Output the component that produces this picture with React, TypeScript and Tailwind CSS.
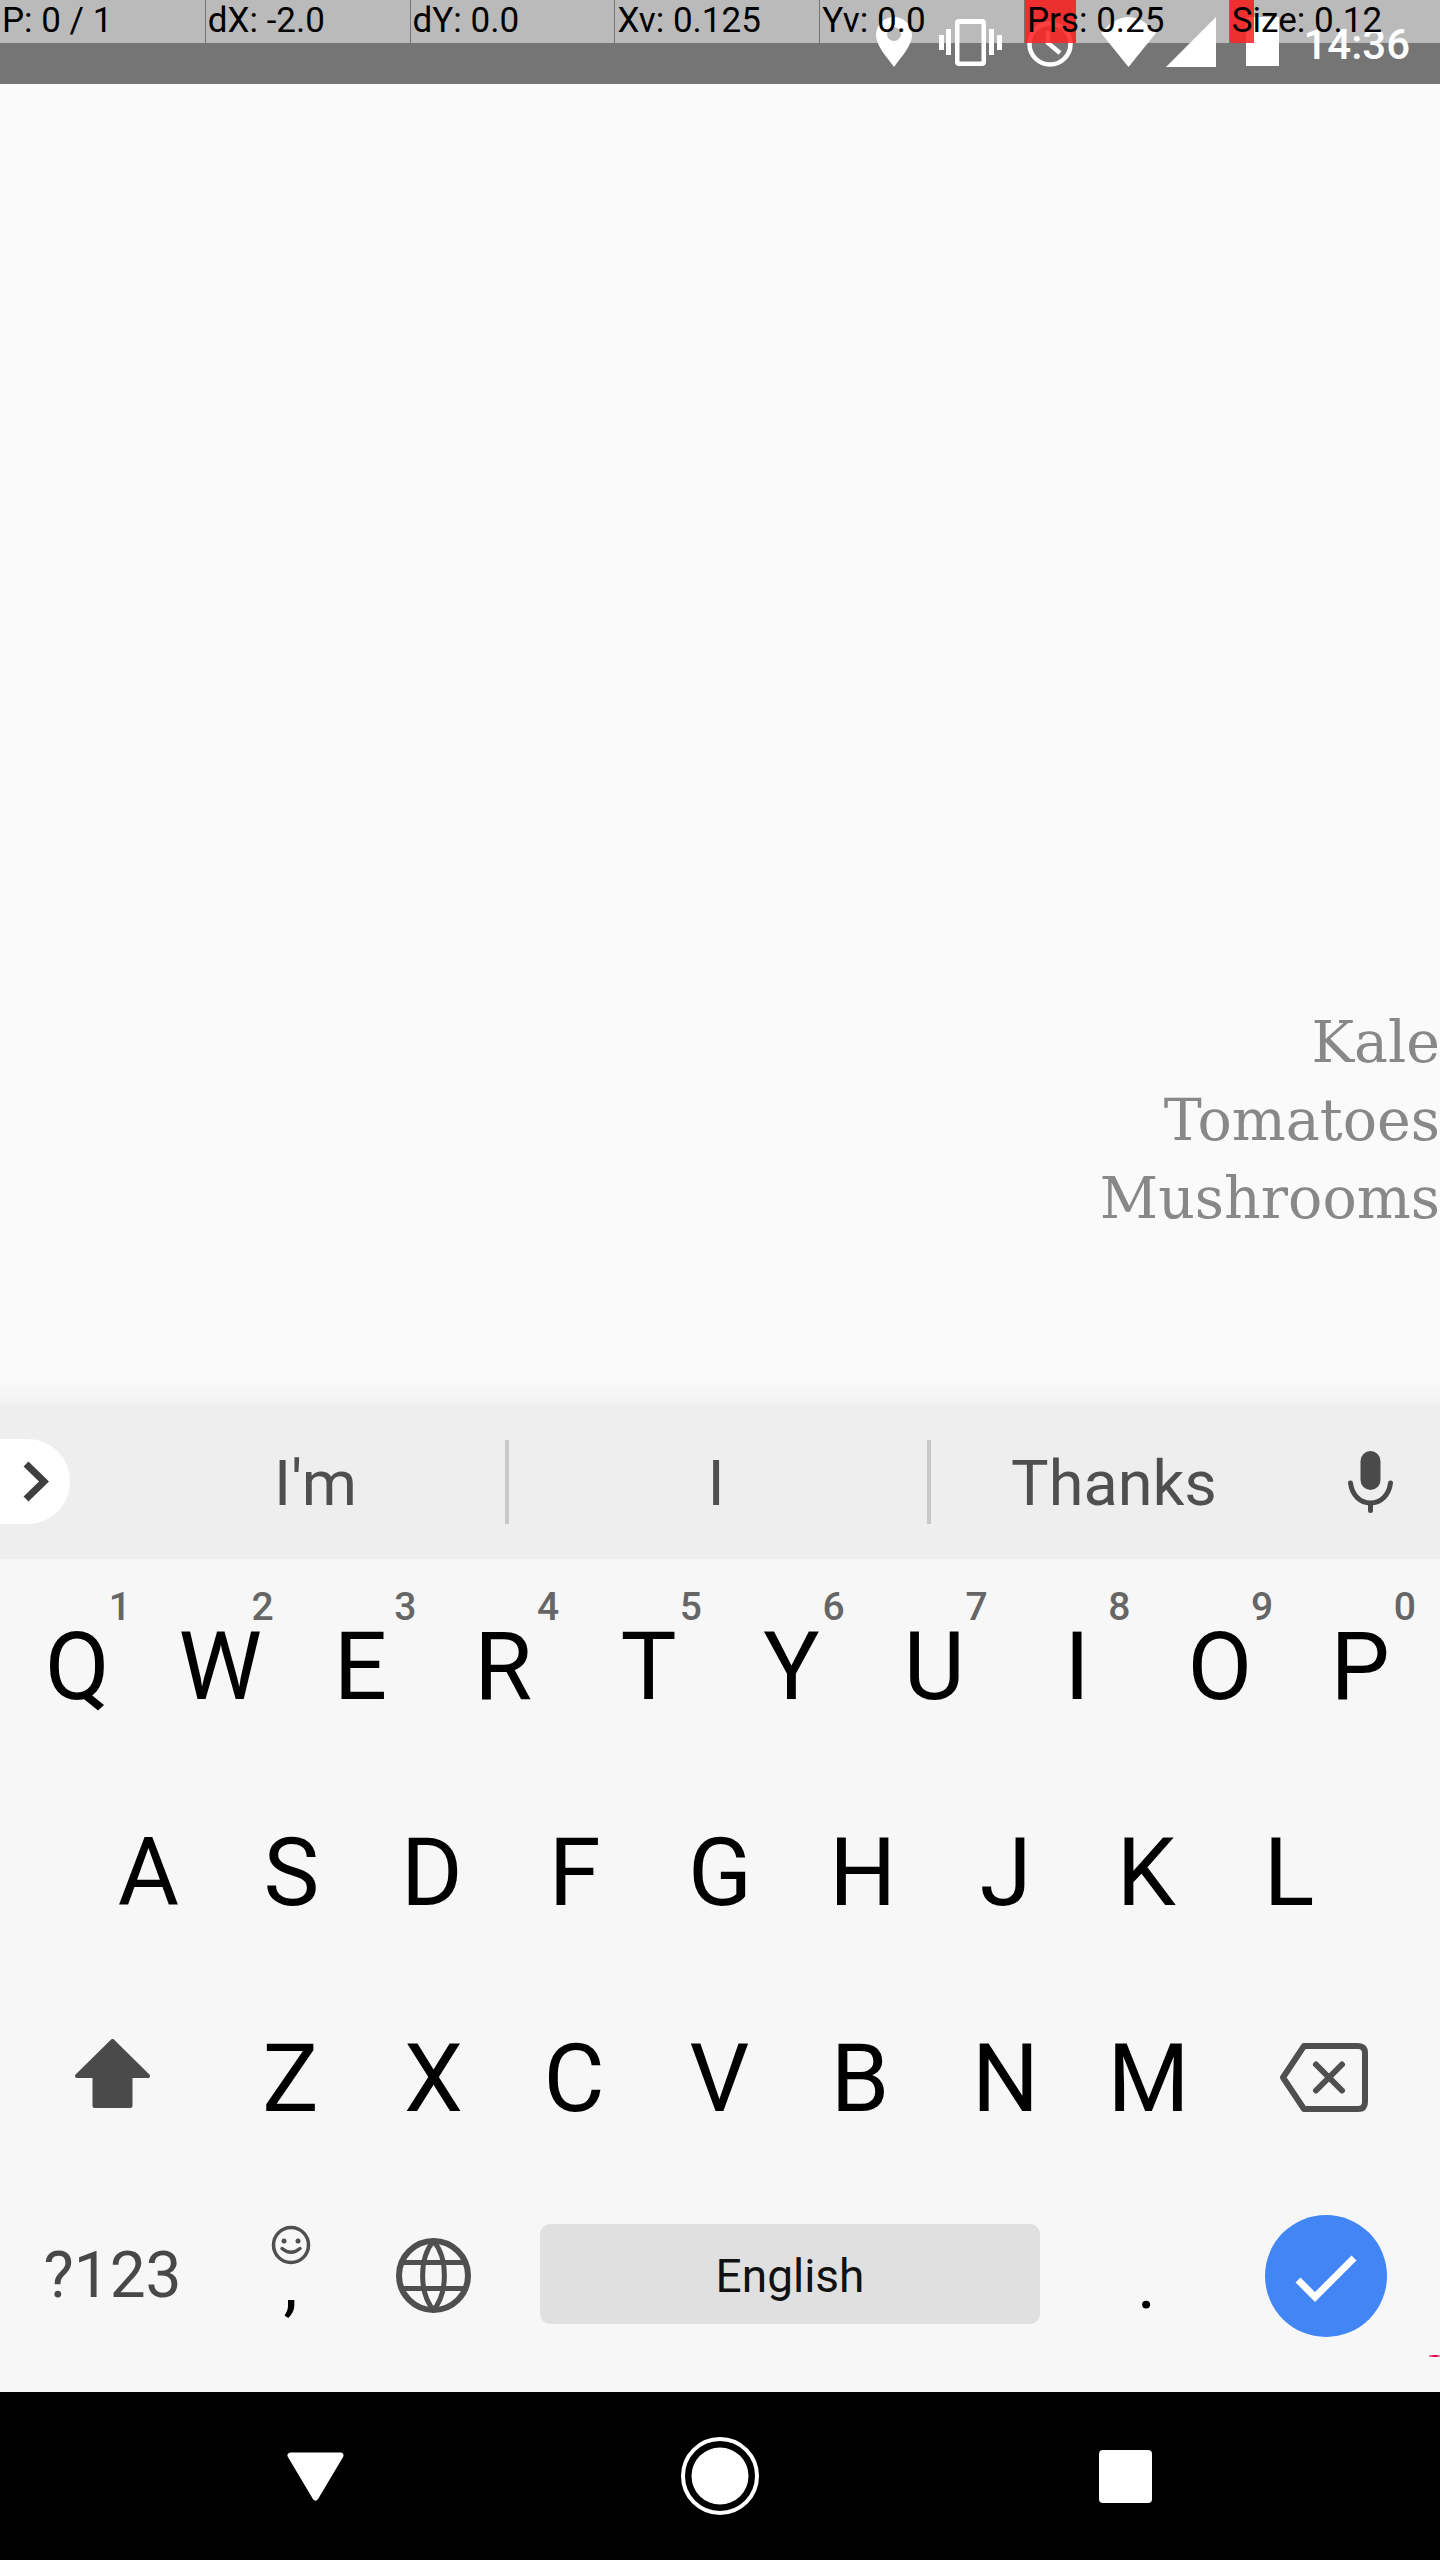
const pointerStats = [
  { label: 'P: 0 / 1' },
  { label: 'dX: -2.0' },
  { label: 'dY: 0.0' },
  { label: 'Xv: 0.125' },
  { label: 'Yv: 0.0' },
  { label: 'Prs: 0.25', bar: 0.25 },
  { label: 'Size: 0.12', bar: 0.12 },
]

const topRow = [
  ['Q', '1'],
  ['W', '2'],
  ['E', '3'],
  ['R', '4'],
  ['T', '5'],
  ['Y', '6'],
  ['U', '7'],
  ['I', '8'],
  ['O', '9'],
  ['P', '0'],
]
const middleRow = ['A', 'S', 'D', 'F', 'G', 'H', 'J', 'K', 'L']
const bottomRow = ['Z', 'X', 'C', 'V', 'B', 'N', 'M']

// these sit a little left of their key's centre in the reference
const leftLeaning = 'ERPDFKLCB'

function StatusIcons() {
  return (
    <div className="flex h-[84px] items-start justify-end bg-[#757575] pt-[17px] pr-[30px]">
      {/* location pin */}
      <svg width="36" height="50" viewBox="0 0 36 50" fill="white">
        <path
          fillRule="evenodd"
          d="M18 0C8 0 0 8 0 18C0 29 11 40 18 50C25 40 36 29 36 18C36 8 28 0 18 0ZM18 10A7 7 0 1 1 18 24A7 7 0 1 1 18 10Z"
        />
      </svg>
      {/* vibrate */}
      <svg className="ml-[27px]" width="63" height="50" viewBox="0 0 63 50" fill="white">
        <path
          fillRule="evenodd"
          d="M20 2H43Q47 2 47 6V45Q47 49 43 49H20Q16 49 16 45V6Q16 2 20 2ZM20.5 7V44.5H42.5V7Z"
        />
        <rect x="0" y="18" width="5" height="15" />
        <rect x="7" y="12" width="5" height="26" />
        <rect x="50" y="12" width="5" height="26" />
        <rect x="58" y="18" width="5" height="15" />
      </svg>
      {/* alarm clock */}
      <svg className="ml-[25px]" width="46" height="50" viewBox="0 0 46 50" fill="none" stroke="white" strokeWidth="4.5">
        <circle cx="23" cy="27" r="20.5" />
        <path d="M21 14V26L33 36" />
      </svg>
      {/* wifi */}
      <svg className="ml-[28px]" width="55" height="50" viewBox="0 0 55 50" fill="white">
        <path d="M0 16Q27.5 -16 55 16L27.5 50Z" />
      </svg>
      {/* signal */}
      <svg className="ml-[10px]" width="50" height="50" viewBox="0 0 50 50" fill="white">
        <path d="M0 50L50 0V50Z" />
      </svg>
      {/* battery */}
      <div className="ml-[30px] h-[49px] w-[33px] bg-white" />
      <span className="ml-[24px] font-[Roboto,sans-serif] text-[42px] leading-[55px] font-medium text-white">14:36</span>
    </div>
  )
}

function PointerOverlay() {
  return (
    <div className="absolute inset-x-0 top-0 flex h-[43px] bg-white/50">
      {pointerStats.map((stat, i) => (
        <div
          key={stat.label}
          className={`relative pl-[2px] ${i > 0 ? 'border-l border-[#757575]' : ''} ${i === 6 ? 'flex-1' : 'w-[204.8px] shrink-0'}`}
        >
          {stat.bar ? <div className="absolute inset-y-0 left-0 bg-[#ff0000]/75" style={{ width: `${stat.bar * 204.8}px` }} /> : null}
          <span className="relative whitespace-nowrap font-[Roboto,sans-serif] text-[35px] leading-[42px] text-black">{stat.label}</span>
        </div>
      ))}
    </div>
  )
}

function Suggestions() {
  return (
    <div className="flex h-[155px] items-center bg-[#eeeeee] font-[Roboto,sans-serif] text-[63px] text-[#4f4f4f]">
      <div className="flex h-[85px] w-[70px] items-center rounded-r-[42px] bg-white pl-[23px]">
        <svg width="26" height="41" viewBox="0 0 26 41" fill="none" stroke="#3f3f3f" strokeWidth="7">
          <path d="M3 3L21 20.5L3 38" />
        </svg>
      </div>
      <div className="w-[435px] pt-[5px] pl-[56px] text-center">I'm</div>
      <div className="h-[84px] w-[4px] bg-[#c8c8c8]" />
      <div className="w-[418px] pt-[5px] pr-[4px] text-center">I</div>
      <div className="h-[84px] w-[4px] bg-[#c8c8c8]" />
      <div className="w-[366px] pt-[5px] text-center">Thanks</div>
      <svg className="ml-[51px]" width="45" height="62" viewBox="0 0 45 62" fill="none">
        <rect x="12.5" y="0" width="20" height="39" rx="10" fill="#4a4a4a" />
        <path
          d="M2.5 32C4 44 12 52 22.5 52S41 44 42.5 32M22.5 52V59.5"
          stroke="#4a4a4a"
          strokeWidth="5"
          strokeLinecap="round"
        />
      </svg>
    </div>
  )
}

function LetterKey({ letter, hint }: { letter: string; hint?: string }) {
  return (
    <div className="relative flex h-full flex-1 items-center justify-center text-[94px] leading-none text-black">
      <span className={leftLeaning.includes(letter) ? 'mr-[5px]' : ''}>{letter}</span>
      {hint ? (
        <span className="absolute top-[24px] right-[18px] text-[39px] leading-none font-medium text-[#666666]">{hint}</span>
      ) : null}
    </div>
  )
}

function Keyboard() {
  return (
    <div className="relative flex h-[833px] flex-col bg-[#f7f7f7] pt-[5px] font-[Roboto,sans-serif]">
      <div className="flex h-[206px] px-[6px]">
        {topRow.map(([letter, hint]) => (
          <LetterKey key={letter} letter={letter} hint={hint} />
        ))}
      </div>
      <div className="flex h-[206px] px-[77px]">
        {middleRow.map((letter) => (
          <LetterKey key={letter} letter={letter} />
        ))}
      </div>
      <div className="flex h-[206px] items-center px-[6px]">
        <div className="flex h-full w-[213px] items-center justify-center pb-[11px]">
          <svg width="75" height="69" viewBox="0 0 75 69" fill="#4a4a4a" stroke="#4a4a4a" strokeWidth="4" strokeLinejoin="round">
            <path d="M37.5 2L73 37H55.5V67H19.5V37H2Z" />
          </svg>
        </div>
        <div className="flex h-full w-[1001px]">
          {bottomRow.map((letter) => (
            <LetterKey key={letter} letter={letter} />
          ))}
        </div>
        <div className="flex h-full flex-1 items-center justify-center pr-[6px] pb-[4px]">
          <svg width="88" height="69" viewBox="0 0 88 69" fill="none" stroke="#4f4f4f" strokeWidth="6">
            <path d="M24 3H78Q85 3 85 10V59Q85 66 78 66H24L3 34.5Z" strokeLinejoin="round" />
            <path d="M36 21.5L62 47.5M62 21.5L36 47.5" strokeLinecap="round" />
          </svg>
        </div>
      </div>
      <div className="flex h-[186px] items-center px-[6px]">
        <div className="flex w-[213px] justify-center pt-[2px] text-[64px] leading-none text-[#484848]">?123</div>
        <div className="relative flex h-full w-[143px] items-center justify-center pt-[17px] text-[72px] leading-none text-black">
          <svg className="absolute top-[43px] left-[52px]" width="40" height="40" viewBox="0 0 40 40" fill="none" stroke="#4f4f4f" strokeWidth="3.5">
            <circle cx="20" cy="20" r="17.5" />
            <circle cx="13" cy="16" r="2.5" fill="#4f4f4f" stroke="none" />
            <circle cx="27" cy="16" r="2.5" fill="#4f4f4f" stroke="none" />
            <path d="M11 23.5Q20 31 29 23.5" strokeLinecap="round" />
          </svg>
          ,
        </div>
        <div className="flex w-[143px] justify-center">
          <svg width="75" height="75" viewBox="0 0 75 75" fill="none" stroke="#4f4f4f">
            <circle cx="37.5" cy="37.5" r="34.5" strokeWidth="6" />
            <path d="M37.5 3C23 20 23 55 37.5 72C52 55 52 20 37.5 3Z" strokeWidth="5" />
            <path d="M6 24.5H69M6 50.5H69" strokeWidth="5" />
          </svg>
        </div>
        <div className="flex w-[570px] justify-center">
          <div className="mb-[2px] flex h-[100px] w-[500px] items-center justify-center rounded-[10px] bg-[#e0e0e0] pt-[3px] text-[46px] leading-none text-[#111111]">
            English
          </div>
        </div>
        <div className="flex h-full w-[143px] items-center justify-center pt-[17px] text-[72px] leading-none text-black">.</div>
        <div className="flex flex-1 justify-center">
          <div className="mt-[2px] flex h-[122px] w-[122px] items-center justify-center rounded-full bg-[#4285f4]">
            <svg width="122" height="122" viewBox="0 0 122 122" fill="none" stroke="white" strokeWidth="7">
              <path d="M33 65L50 82L89 43" />
            </svg>
          </div>
        </div>
      </div>
      {/* end of the pointer trace */}
      <div className="absolute top-[796px] right-0 h-[2px] w-[11px] bg-[linear-gradient(to_right,#e79ac0,#e8004a_45%,#e8004a_65%,#d8a8d8)]" />
    </div>
  )
}

function NavBar() {
  return (
    <div className="flex h-[168px] items-center justify-center bg-black">
      <div className="flex w-[405px] justify-center">
        <svg width="57" height="49" viewBox="0 0 57 49" fill="white" stroke="white" strokeWidth="6" strokeLinejoin="round">
          <path d="M3.5 3.5H53.5L28.5 45.5Z" />
        </svg>
      </div>
      <div className="flex w-[405px] justify-center">
        <svg width="78" height="78" viewBox="0 0 78 78" fill="none">
          <circle cx="39" cy="39" r="37" stroke="white" strokeWidth="4" />
          <circle cx="39" cy="39" r="28.5" fill="white" />
        </svg>
      </div>
      <div className="flex w-[405px] justify-center">
        <div className="h-[53px] w-[53px] rounded-[4px] bg-white" />
      </div>
    </div>
  )
}

export default function App() {
  return (
    <div className="relative flex h-[2560px] w-[1440px] flex-col overflow-hidden bg-[#fafafa]">
      <StatusIcons />
      <div className="h-[1296px] pt-[919px] text-right font-['DejaVu_Serif',serif] text-[57px] leading-[78px] text-[#888888]">
        <div>Kale</div>
        <div>Tomatoes</div>
        <div>Mushrooms</div>
      </div>
      <div className="h-[24px] bg-gradient-to-b from-[#fafafa] to-[#f2f2f2]" />
      <Suggestions />
      <Keyboard />
      <NavBar />
      <PointerOverlay />
    </div>
  )
}
